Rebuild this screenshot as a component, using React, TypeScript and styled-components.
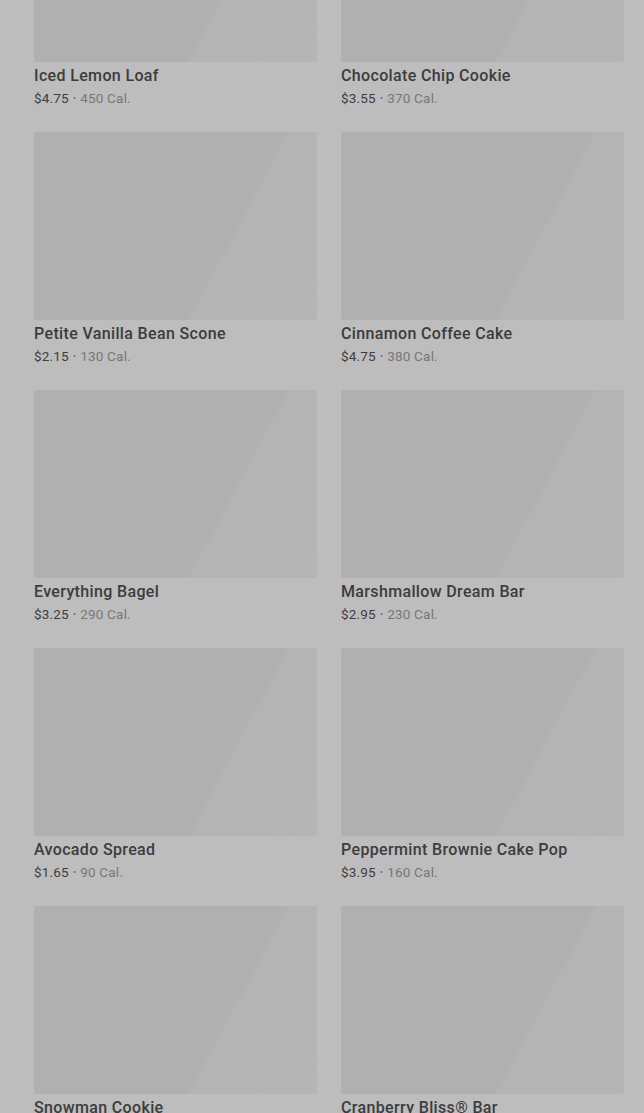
import React, { FC } from 'react'
import styled, { createGlobalStyle } from 'styled-components'

type Item = { name: string; price: string; cal: number }

const items: Item[] = [
  { name: 'Iced Lemon Loaf', price: '$4.75', cal: 450 },
  { name: 'Chocolate Chip Cookie', price: '$3.55', cal: 370 },
  { name: 'Petite Vanilla Bean Scone', price: '$2.15', cal: 130 },
  { name: 'Cinnamon Coffee Cake', price: '$4.75', cal: 380 },
  { name: 'Everything Bagel', price: '$3.25', cal: 290 },
  { name: 'Marshmallow Dream Bar', price: '$2.95', cal: 230 },
  { name: 'Avocado Spread', price: '$1.65', cal: 90 },
  { name: 'Peppermint Brownie Cake Pop', price: '$3.95', cal: 160 },
  { name: 'Snowman Cookie', price: '$3.45', cal: 350 },
  { name: 'Cranberry Bliss® Bar', price: '$3.75', cal: 350 },
]

const App: FC = () => {
  return (
    <>
      <GlobalStyle />
      <Page>
        <Grid>
          {items.map((item) => (
            <Card key={item.name}>
              <Thumb />
              <Name>{item.name}</Name>
              <Meta>
                <Price>{item.price}</Price>
                <Dot>•</Dot>
                <Cal>{item.cal} Cal.</Cal>
              </Meta>
            </Card>
          ))}
        </Grid>
      </Page>
    </>
  )
}

export default App

const GlobalStyle = createGlobalStyle`
  html, body {
    margin: 0;
    padding: 0;
    background: #bdbdbd;
    overflow: hidden;
  }
`

const Page = styled.div`
  width: 644px;
  height: 1113px;
  overflow: hidden;
  background: #bdbdbd;
  font-family: Roboto, 'Liberation Sans', sans-serif;
`

// list is scrolled: first row of images is partly above the fold
const Grid = styled.div`
  display: grid;
  grid-template-columns: 283px 283px;
  column-gap: 24px;
  row-gap: 24px;
  padding: 0 20px 0 34px;
  margin-top: -126px;
`

const Card = styled.div`
  display: flex;
  flex-direction: column;
`

const Thumb = styled.div`
  flex-shrink: 0;
  height: 188px;
  border-radius: 2px;
  background: linear-gradient(118deg, #b0b0b0 0%, #b0b0b0 66%, #b4b4b4 67%, #b5b5b5 100%);
`

const Name = styled.div`
  margin-top: 2px;
  font-size: 16px;
  line-height: 24px;
  font-weight: 500;
  color: #3c3c3c;
  letter-spacing: 0.35px;
  white-space: nowrap;
`

const Meta = styled.div`
  display: flex;
  align-items: center;
  gap: 4px;
  font-size: 13.5px;
  line-height: 20px;
  letter-spacing: 0.2px;
`

const Price = styled.span`
  color: #3d3d3d;
`

const Dot = styled.span`
  color: #6f6f6f;
  font-size: 9px;
`

const Cal = styled.span`
  color: #777777;
`
